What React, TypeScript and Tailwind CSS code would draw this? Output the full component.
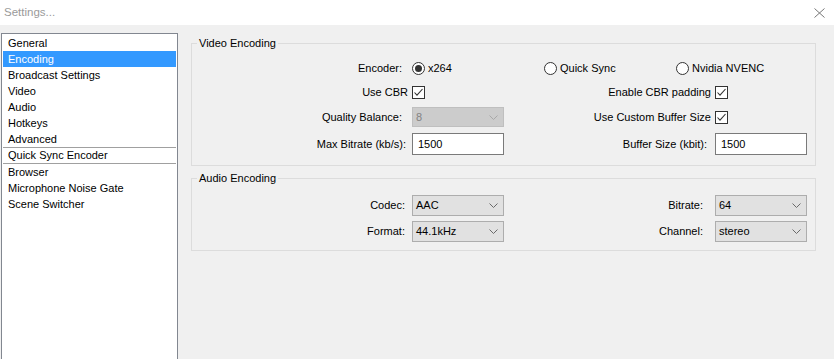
import type { ReactNode } from "react";

const font = { fontFamily: '"Liberation Sans", Arial, sans-serif' };

const pages = [
  "General",
  "Encoding",
  "Broadcast Settings",
  "Video",
  "Audio",
  "Hotkeys",
  "Advanced",
];

const plugins = ["Browser", "Microphone Noise Gate", "Scene Switcher"];

function Chevron({ muted }: { muted?: boolean }) {
  return (
    <svg width="9" height="5" viewBox="0 0 9 5" className="shrink-0">
      <path
        d="M0.5 0.5 L4.5 4.5 L8.5 0.5"
        fill="none"
        stroke={muted ? "#a8a8a8" : "#6a6a6a"}
        strokeWidth="1"
      />
    </svg>
  );
}

function Select({ value, disabled }: { value: string; disabled?: boolean }) {
  return (
    <div
      className={
        disabled
          ? "flex h-[20px] w-[92px] items-center justify-between border border-[#bfbfbf] bg-[#cccccc] pl-[3px] pr-[5px] text-[#838383]"
          : "flex h-[21px] w-[92px] items-center justify-between border border-[#adadad] bg-[#e1e1e1] pl-[3px] pr-[5px] text-black"
      }
    >
      <span>{value}</span>
      <Chevron muted={disabled} />
    </div>
  );
}

function TextField({ value }: { value: string }) {
  return (
    <div className="flex h-[22px] w-[92px] items-center border border-[#7a7a7a] bg-white pl-[5px] text-black">
      {value}
    </div>
  );
}

function Checkbox() {
  return (
    <svg width="13" height="13" viewBox="0 0 13 13" className="shrink-0">
      <rect x="0.5" y="0.5" width="12" height="12" fill="#fff" stroke="#333" />
      <path
        d="M2.5 6.5 L5 9.2 L10.5 3"
        fill="none"
        stroke="#333"
        strokeWidth="1.1"
      />
    </svg>
  );
}

function Radio({ checked, label }: { checked?: boolean; label: string }) {
  return (
    <div className="flex items-center gap-[3px]">
      <svg width="13" height="13" viewBox="0 0 13 13" className="shrink-0">
        <circle cx="6.5" cy="6.5" r="6" fill="#fff" stroke="#333" />
        {checked && <circle cx="6.5" cy="6.5" r="3.5" fill="#333" />}
      </svg>
      <span>{label}</span>
    </div>
  );
}

function Label({ children, pr }: { children: ReactNode; pr: string }) {
  return <div className={`flex justify-end ${pr}`}>{children}</div>;
}

function Row({ h, children }: { h: string; children: ReactNode }) {
  return (
    <div className={`grid ${h} grid-cols-[220px_92px_1fr_92px] items-center pr-[8px]`}>
      {children}
    </div>
  );
}

function Group({ title, children, className }: { title: string; children: ReactNode; className?: string }) {
  return (
    <fieldset className={`w-[625px] border border-[#dcdcdc] ${className ?? ""}`}>
      <legend className="ml-[5px] px-[2px] leading-[15px]">{title}</legend>
      {children}
    </fieldset>
  );
}

export default function App() {
  return (
    <div
      className="flex h-[359px] w-[834px] flex-col overflow-hidden bg-[#f0f0f0] text-[11px] text-black"
      style={font}
    >
      <div className="flex h-[25px] shrink-0 items-center justify-between bg-white pl-[4px] pr-[9px]">
        <span className="text-[11.5px] text-[#9a9a9a]">Settings...</span>
        <svg width="11" height="10" viewBox="0 0 11 10">
          <path d="M0.5 0.5 L10.5 9.5 M10.5 0.5 L0.5 9.5" stroke="#777" strokeWidth="1" />
        </svg>
      </div>

      <div className="flex min-h-0 flex-1 pt-[8px]">
        <div className="ml-[1px] h-[340px] w-[177px] shrink-0 border border-[#828790] bg-white p-[1px]">
          {pages.map((p) => (
            <div
              key={p}
              className={
                p === "Encoding"
                  ? "flex h-[16px] items-center bg-[#3399ff] pl-[5px] text-white"
                  : "flex h-[16px] items-center pl-[5px]"
              }
            >
              {p}
            </div>
          ))}
          <div className="flex h-[17px] items-center border-y border-[#a0a0a0] pl-[5px]">
            Quick Sync Encoder
          </div>
          {plugins.map((p) => (
            <div key={p} className="flex h-[16px] items-center pl-[5px]">
              {p}
            </div>
          ))}
        </div>

        <div className="ml-[13px] flex flex-col pt-[3px]">
          <Group title="Video Encoding">
            <div className="pb-[7px] pt-[5px]">
              <div className="grid h-[24px] grid-cols-[220px_132px_132px_1fr] items-center">
                <Label pr="pr-[10px]">Encoder:</Label>
                <Radio checked label="x264" />
                <Radio label="Quick Sync" />
                <Radio label="Nvidia NVENC" />
              </div>
              <Row h="h-[24px]">
                <Label pr="pr-[4px]">Use CBR</Label>
                <Checkbox />
                <Label pr="pr-[4px]">Enable CBR padding</Label>
                <Checkbox />
              </Row>
              <Row h="h-[26px]">
                <Label pr="pr-[10px]">Quality Balance:</Label>
                <Select value="8" disabled />
                <Label pr="pr-[4px]">Use Custom Buffer Size</Label>
                <Checkbox />
              </Row>
              <Row h="h-[28px]">
                <Label pr="pr-[6px]">Max Bitrate (kb/s):</Label>
                <TextField value="1500" />
                <Label pr="pr-[8px]">Buffer Size (kbit):</Label>
                <TextField value="1500" />
              </Row>
            </div>
          </Group>

          <Group title="Audio Encoding" className="mt-[5px]">
            <div className="pb-[6px] pt-[6px]">
              <Row h="h-[26px]">
                <Label pr="pr-[7px]">Codec:</Label>
                <Select value="AAC" />
                <Label pr="pr-[12px]">Bitrate:</Label>
                <Select value="64" />
              </Row>
              <Row h="h-[26px]">
                <Label pr="pr-[7px]">Format:</Label>
                <Select value="44.1kHz" />
                <Label pr="pr-[12px]">Channel:</Label>
                <Select value="stereo" />
              </Row>
            </div>
          </Group>
        </div>
      </div>
    </div>
  );
}
